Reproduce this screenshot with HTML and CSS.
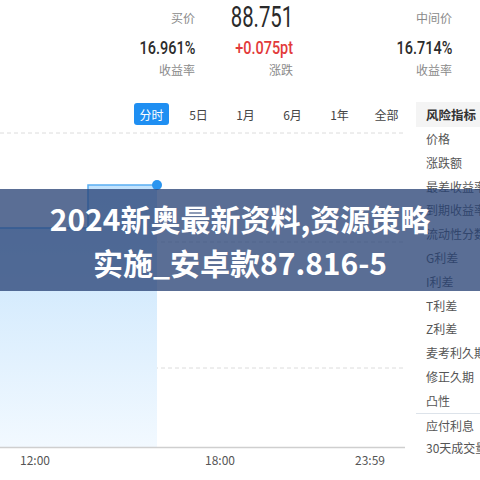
FILE: index.html
```html
<!DOCTYPE html>
<html lang="zh">
<head>
<meta charset="utf-8">
<link rel="stylesheet" href="styles.css">
</head>
<body>
<div class="page">
  <div class="quote">
    <div class="col c1">
      <div class="lbl top">买价</div>
      <div class="val"><span class="nar">16.961%</span></div>
      <div class="lbl">收益率</div>
    </div>
    <div class="col c2">
      <div class="big"><span class="nar">88.751</span></div>
      <div class="val red"><span class="nar">+0.075pt</span></div>
      <div class="lbl">涨跌</div>
    </div>
    <div class="col c3">
      <div class="lbl top">中间价</div>
      <div class="val"><span class="nar">16.714%</span></div>
      <div class="lbl">收益率</div>
    </div>
  </div>
  <div class="main">
    <div class="left">
      <div class="tabs">
        <div class="tab"><span class="active">分时</span></div>
        <div class="tab">5日</div>
        <div class="tab">1月</div>
        <div class="tab">6月</div>
        <div class="tab">1年</div>
        <div class="tab">全部</div>
      </div>
      <svg class="chart" width="405" height="320" viewBox="0 0 405 320">
        <defs>
          <linearGradient id="fill" x1="0" y1="0" x2="0" y2="1">
            <stop offset="0" stop-color="#c2e2fc"/>
            <stop offset="1" stop-color="#f2f9ff"/>
          </linearGradient>
        </defs>
        <line x1="0" y1="2" x2="405" y2="2" class="grid"/>
        <line x1="0" y1="111" x2="405" y2="111" class="grid"/>
        <line x1="0" y1="237" x2="405" y2="237" class="grid"/>
        <path d="M0 97 H88 V54 H157 V316 H0 Z" fill="url(#fill)"/>
        <path d="M0 97 H88 V54 H157" fill="none" stroke="#5aaef2" stroke-width="1.5"/>
        <circle cx="157" cy="54" r="5" fill="#2a95f0"/>
        <line x1="0" y1="316.5" x2="405" y2="316.5" stroke="#cfcfcf" stroke-width="1.5"/>
      </svg>
      <div class="axis">
        <span class="t1">12:00</span>
        <span class="t2">18:00</span>
        <span class="t3">23:59</span>
      </div>
    </div>
    <div class="side">
      <div class="head">风险指标</div>
      <ul class="list">
        <li>价格</li>
        <li>涨跌额</li>
        <li>最差收益率</li>
        <li>到期收益率</li>
        <li>流动性分数</li>
        <li>G利差</li>
        <li>I利差</li>
        <li>T利差</li>
        <li>Z利差</li>
        <li>麦考利久期</li>
        <li>修正久期</li>
        <li>凸性</li>
        <li class="sep">应付利息</li>
        <li>30天成交量</li>
      </ul>
    </div>
  </div>
  <div class="banner">
    <div class="btxt">2024新奥最新资料,资源策略<br>实施_安卓款87.816-5</div>
  </div>
</div>
</body>
</html>
```
FILE: styles.css
```css
* { box-sizing: border-box; }
html, body { margin: 0; padding: 0; }
body {
  width: 480px;
  height: 480px;
  overflow: hidden;
  background: #fff;
  font-family: "Noto Sans CJK SC", "Noto Sans", sans-serif;
  color: #333;
}
.page { position: relative; width: 480px; height: 480px; }

.quote {
  display: flex;
  height: 100px;
}
.col {
  display: flex;
  flex-direction: column;
  align-items: flex-end;
}
.c1 { width: 195px; }
.c2 { width: 98px; }
.c3 { width: 159px; }

.lbl {
  font-size: 12px;
  color: #8a8a8a;
  height: 20px;
  line-height: 20px;
}
.lbl.top { margin-top: 8px; height: 26px; line-height: 20px; }
.nar {
  display: inline-block;
  transform: scaleX(0.7);
  transform-origin: right center;
}
.val .nar { transform: scaleX(0.76); }
.big {
  font-family: Roboto, sans-serif;
  font-size: 29px;
  color: #2a2a2a;
  height: 34px;
  line-height: 34px;
}
.val {
  font-family: Roboto, sans-serif;
  font-size: 19px;
  font-weight: 500;
  color: #2c2c2c;
  height: 26px;
  line-height: 28px;
}
.val.red { color: #e23a3a; }

.main { display: flex; }
.left { width: 416px; }
.tabs {
  display: flex;
  padding-left: 128px;
  height: 31px;
  padding-top: 3px;
}
.tab {
  width: 47px;
  height: 22px;
  display: flex;
  justify-content: center;
  align-items: center;
  font-size: 12px;
  color: #444;
}
.tab .active {
  background: #1f8ff2;
  color: #fff;
  border-radius: 3px;
  width: 35px;
  height: 22px;
  display: flex;
  justify-content: center;
  align-items: center;
}
.chart { display: block; }
.grid { stroke: #dcdcdc; stroke-width: 1; stroke-dasharray: 4 3; }

.axis {
  position: relative;
  height: 30px;
  font-size: 12px;
  color: #555;
}
.axis span { position: absolute; top: 0; }
.t1 { left: 20px; }
.t2 { left: 205px; }
.t3 { left: 355px; }

.side { width: 64px; white-space: nowrap; overflow: hidden; }
.head {
  margin-top: 2px;
  height: 25px;
  background: #f4f4f4;
  font-size: 12.5px;
  font-weight: 700;
  color: #333;
  padding-left: 10px;
  line-height: 25px;
}
.list { list-style: none; margin: 0; padding: 0; }
.list li {
  height: 23.8px;
  line-height: 23.8px;
  padding-left: 10px;
  font-size: 12px;
  color: #555;
}
.list li.sep { border-top: 1px solid #dde3ea; }

.banner {
  position: absolute;
  left: 0;
  top: 189px;
  width: 480px;
  height: 102px;
  background: rgba(38, 64, 116, 0.76);
  display: flex;
  align-items: center;
  justify-content: center;
}
.btxt {
  font-family: "Noto Sans CJK SC", sans-serif;
  font-weight: 700;
  font-size: 30px;
  line-height: 44px;
  color: #fff;
  text-align: center;
}
```
